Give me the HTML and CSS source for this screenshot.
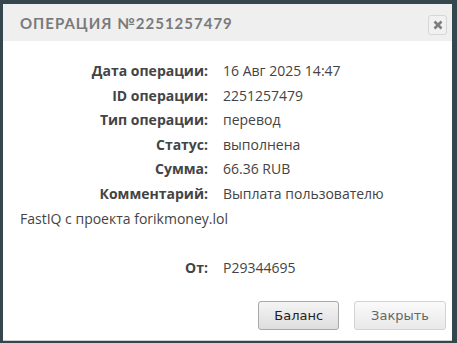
FILE: index.html
```html
<!DOCTYPE html>
<html lang="ru">
<head>
    <meta charset="UTF-8">
    <meta name="viewport" content="width=device-width, initial-scale=1.0">
    <title>Операция №2251257479</title>
    <link rel="stylesheet" href="styles.css">
</head>
<body>
    <div class="dialog">
        <div class="dialog-head">
            <span class="dialog-title">Операция №2251257479</span>
            <button type="button" class="dialog-close" title="Закрыть">
                <svg width="10" height="10" viewBox="0 0 10 10"><path d="M1.5 1.5 L8.5 8.5 M8.5 1.5 L1.5 8.5" stroke="#7d7d7d" stroke-width="2.6"/></svg>
            </button>
        </div>

        <div class="dialog-body">
            <div class="row"><span class="label">Дата операции:</span><span class="value">16 Авг 2025 14:47</span></div>
            <div class="row"><span class="label">ID операции:</span><span class="value">2251257479</span></div>
            <div class="row"><span class="label">Тип операции:</span><span class="value">перевод</span></div>
            <div class="row"><span class="label">Статус:</span><span class="value">выполнена</span></div>
            <div class="row"><span class="label">Сумма:</span><span class="value">66.36 RUB</span></div>
            <div class="row"><span class="label">Комментарий:</span>Выплата пользователю FastIQ с проекта forikmoney.lol</div>
            <div class="row row-empty"></div>
            <div class="row"><span class="label">От:</span><span class="value">P29344695</span></div>
        </div>

        <div class="dialog-foot">
            <button type="button" class="btn btn-main">Баланс</button>
            <button type="button" class="btn">Закрыть</button>
        </div>
    </div>
</body>
</html>
```

FILE: styles.css
```css
body {
    margin: 0;
    background-color: #36464d;
    font-family: 'Open Sans', sans-serif;
    color: #444;
}
.dialog {
    margin: 4px 5px 0 3px;
    height: 337px;
    background: #ffffff;
    display: flex;
    flex-direction: column;
    box-sizing: border-box;
    border-bottom: 1px solid #cfcfcf;
}
.dialog-head {
    height: 37px;
    background: #efefef;
    display: flex;
    align-items: center;
    justify-content: space-between;
    padding: 0 5px 0 17px;
}
.dialog-title {
    font-family: 'Lato', sans-serif;
    text-transform: uppercase;
    font-size: 15px;
    font-weight: 700;
    letter-spacing: 1px;
    color: #7a7a7a;
}
.dialog-close {
    width: 19px;
    height: 20px;
    padding: 0;
    border: 1px solid #d6d6d6;
    border-radius: 3px;
    background: #f1f1f1;
    display: flex;
    align-items: center;
    justify-content: center;
    margin-top: 5px;
    cursor: pointer;
}
.dialog-body {
    padding: 18px 25px 0 17px;
    font-size: 14px;
    line-height: 24.6px;
    flex: 1;
}
.row-empty {
    height: 24.6px;
}
.label {
    display: inline-block;
    width: 188px;
    text-align: right;
    font-weight: 700;
    margin-right: 15px;
}
.dialog-foot {
    display: flex;
    justify-content: flex-end;
    gap: 15px;
    padding: 0 6px 10px 0;
}
.btn {
    font-family: 'DejaVu Sans', sans-serif;
    font-size: 13px;
    height: 29px;
    padding: 0 16px;
    border: 1px solid #d3d3d3;
    border-radius: 3px;
    background: linear-gradient(#fafafa, #e9e9e9);
    color: #666;
    cursor: pointer;
}
.btn-main {
    border-color: #a8a8a8;
    background: linear-gradient(#f4f4f4, #dedede);
    color: #222;
    padding: 0 15px;
}
```
